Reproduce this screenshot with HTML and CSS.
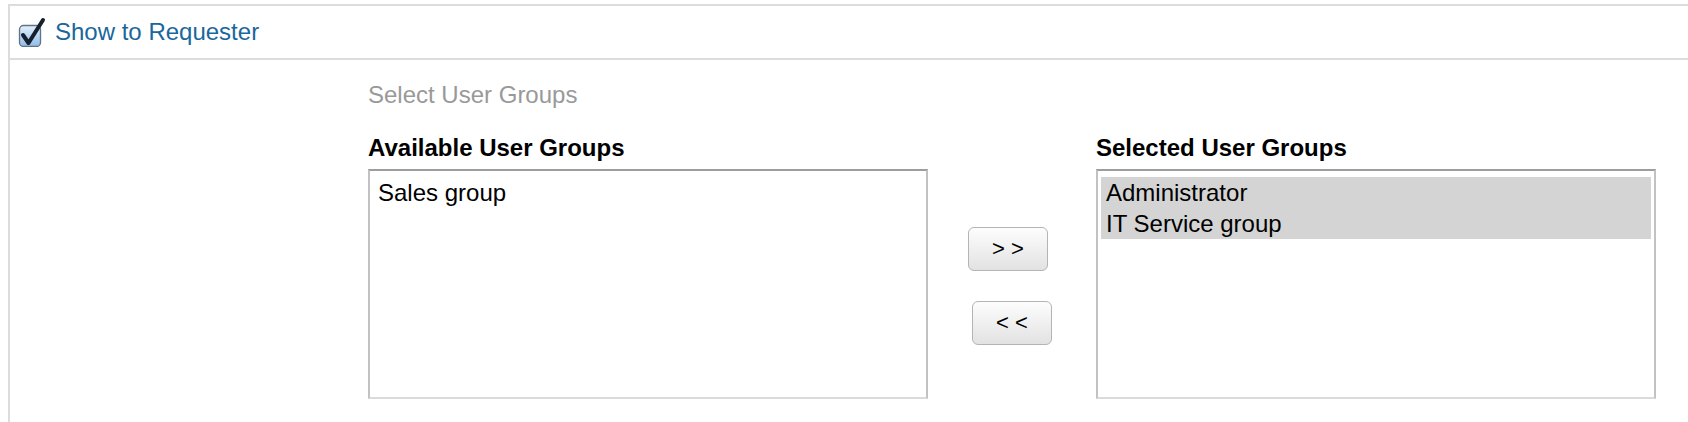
FILE: index.html
```html
<!DOCTYPE html>
<html lang="en">
<head>
  <meta charset="UTF-8" />
  <title>Show to Requester</title>
  <link rel="stylesheet" href="styles.css">
</head>
<body>

  <!-- Panel -->
  <div class="panel">
    <div class="panel-header">
      <svg class="check" width="30" height="30" viewBox="0 0 30 30">
        <defs>
          <linearGradient id="boxfill" x1="0" y1="0" x2="0" y2="1">
            <stop offset="0" stop-color="#e4f0fc"/>
            <stop offset="1" stop-color="#8fbbe8"/>
          </linearGradient>
        </defs>
        <rect x="2.5" y="8.5" width="21" height="21" rx="4" fill="url(#boxfill)" stroke="#5f7389" stroke-width="1.3"/>
        <path d="M6 18 L11.5 26 L26 3" fill="none" stroke="#16202e" stroke-width="4" stroke-linecap="round" stroke-linejoin="round"/>
      </svg>
      <span class="header-title">Show to Requester</span>
    </div>

    <div class="panel-body">
      <div class="hint">Select User Groups</div>

      <div class="columns">
        <div class="col">
          <div class="col-title">Available User Groups</div>
          <div class="listbox">
            <div class="option">Sales group</div>
          </div>
        </div>

        <div class="mover">
          <button type="button" class="move-btn move-add">&gt; &gt;</button>
          <button type="button" class="move-btn">&lt; &lt;</button>
        </div>

        <div class="col">
          <div class="col-title">Selected User Groups</div>
          <div class="listbox">
            <div class="option selected">Administrator</div>
            <div class="option selected">IT Service group</div>
          </div>
        </div>
      </div>
    </div>
  </div>

</body>
</html>
```

FILE: styles.css
```css
body {
  margin: 0;
  font-family: "Liberation Sans", Arial, sans-serif;
  font-size: 24px;
  color: #000;
  background: #fff;
}

.panel {
  margin: 4px 0 0 8px;
  border-top: 2px solid #dcdcdc;
  border-left: 2px solid #dcdcdc;
  min-height: 430px;
}

.panel-header {
  display: flex;
  align-items: center;
  gap: 8px;
  height: 52px;
  padding-left: 7px;
  border-bottom: 2px solid #dcdcdc;
}

.check {
  display: block;
}

.header-title {
  color: #1a679c;
}

.panel-body {
  padding: 21px 0 0 358px;
}

.hint {
  color: #999;
  line-height: 28px;
}

.columns {
  display: flex;
  margin-top: 25px;
}

.col-title {
  font-weight: bold;
  line-height: 28px;
  margin-bottom: 7px;
}

.listbox {
  box-sizing: border-box;
  width: 560px;
  height: 230px;
  padding: 6px 3px;
  border: 2px solid #c2c2c2;
  border-top-color: #9d9d9d;
  border-bottom-color: #dadada;
  background: #fff;
}

.option {
  padding: 0 5px;
  line-height: 31px;
}

.option.selected {
  background: #d4d4d4;
}

.mover {
  width: 168px;
  display: flex;
  flex-direction: column;
  align-items: center;
  gap: 30px;
  padding-top: 93px;
}

.move-btn {
  width: 80px;
  height: 44px;
  font-family: "Liberation Sans", Arial, sans-serif;
  font-size: 22px;
  color: #000;
  background: linear-gradient(to bottom, #fdfdfd, #f1f1f1 45%, #e2e2e2);
  border: 1px solid #b4b4b4;
  border-radius: 6px;
  cursor: pointer;
}

.move-add {
  margin-right: 8px;
}
```
